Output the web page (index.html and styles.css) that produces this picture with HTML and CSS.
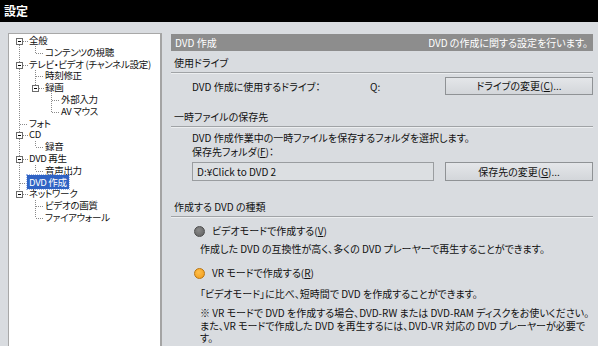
FILE: index.html
```html
<!DOCTYPE html>
<html lang="ja">
<head>
<meta charset="utf-8">
<title>設定</title>
<link rel="stylesheet" href="styles.css">
</head>
<body>
<div class="titlebar">設定</div>
<div class="main">
  <div class="tree">
    <svg class="tree-lines" width="152" height="200" viewBox="0 0 152 200">
      <g stroke="#8a8a8a" stroke-width="1" stroke-dasharray="1 1" fill="none">
        <line x1="10.5" y1="7" x2="10.5" y2="160"/>
        <line x1="14" y1="7.5" x2="19" y2="7.5"/>
        <line x1="14" y1="31.5" x2="19" y2="31.5"/>
        <line x1="11" y1="90.5" x2="19" y2="90.5"/>
        <line x1="14" y1="101.5" x2="19" y2="101.5"/>
        <line x1="14" y1="125.5" x2="19" y2="125.5"/>
        <line x1="11" y1="149.5" x2="19" y2="149.5"/>
        <line x1="14" y1="160.5" x2="19" y2="160.5"/>
        <line x1="26.5" y1="12" x2="26.5" y2="19"/>
        <line x1="26.5" y1="36" x2="26.5" y2="54"/>
        <line x1="26.5" y1="107" x2="26.5" y2="113"/>
        <line x1="26.5" y1="131" x2="26.5" y2="137"/>
        <line x1="26.5" y1="166" x2="26.5" y2="184"/>
        <line x1="27" y1="19.5" x2="35" y2="19.5"/>
        <line x1="27" y1="42.5" x2="35" y2="42.5"/>
        <line x1="30" y1="54.5" x2="35" y2="54.5"/>
        <line x1="27" y1="113.5" x2="35" y2="113.5"/>
        <line x1="27" y1="137.5" x2="35" y2="137.5"/>
        <line x1="27" y1="172.5" x2="35" y2="172.5"/>
        <line x1="27" y1="184.5" x2="35" y2="184.5"/>
        <line x1="42.5" y1="59" x2="42.5" y2="78"/>
        <line x1="43" y1="66.5" x2="51" y2="66.5"/>
        <line x1="43" y1="78.5" x2="51" y2="78.5"/>
      </g>
      <g stroke="#6c6c6c" fill="#ffffff">
        <rect x="7.5" y="4.5" width="6" height="6"/>
        <rect x="7.5" y="28.5" width="6" height="6"/>
        <rect x="23.5" y="51.5" width="6" height="6"/>
        <rect x="7.5" y="98.5" width="6" height="6"/>
        <rect x="7.5" y="122.5" width="6" height="6"/>
        <rect x="7.5" y="157.5" width="6" height="6"/>
      </g>
      <g stroke="#000000">
        <line x1="9" y1="7.5" x2="12" y2="7.5"/>
        <line x1="9" y1="31.5" x2="12" y2="31.5"/>
        <line x1="25" y1="54.5" x2="28" y2="54.5"/>
        <line x1="9" y1="101.5" x2="12" y2="101.5"/>
        <line x1="9" y1="125.5" x2="12" y2="125.5"/>
        <line x1="9" y1="160.5" x2="12" y2="160.5"/>
      </g>
    </svg>
    <div class="row l0"><span class="lbl">全般</span></div>
    <div class="row l1"><span class="lbl">コンテンツの視聴</span></div>
    <div class="row l0"><span class="lbl">テレビ・ビデオ (チャンネル設定)</span></div>
    <div class="row l1"><span class="lbl">時刻修正</span></div>
    <div class="row l1"><span class="lbl">録画</span></div>
    <div class="row l2"><span class="lbl">外部入力</span></div>
    <div class="row l2"><span class="lbl">AV マウス</span></div>
    <div class="row l0"><span class="lbl">フォト</span></div>
    <div class="row l0"><span class="lbl">CD</span></div>
    <div class="row l1"><span class="lbl">録音</span></div>
    <div class="row l0"><span class="lbl">DVD 再生</span></div>
    <div class="row l1"><span class="lbl">音声出力</span></div>
    <div class="row l0"><span class="lbl selected">DVD 作成</span></div>
    <div class="row l0"><span class="lbl">ネットワーク</span></div>
    <div class="row l1"><span class="lbl">ビデオの画質</span></div>
    <div class="row l1"><span class="lbl">ファイアウォール</span></div>
  </div>

  <div class="pane">
    <div class="pane-head"><span>DVD 作成</span><span>DVD の作成に関する設定を行います。</span></div>

    <div class="sec-title first">使用ドライブ</div>
    <div class="drive-row">
      <span class="drive-label">DVD 作成に使用するドライブ：</span>
      <span class="drive">Q:</span>
      <div class="btn">ドライブの変更(<u>C</u>)...</div>
    </div>

    <div class="sec-title second">一時ファイルの保存先</div>
    <div class="text-line desc-top">DVD 作成作業中の一時ファイルを保存するフォルダを選択します。</div>
    <div class="text-line folder-label">保存先フォルダ(<u>F</u>)：</div>
    <div class="folder-row">
      <div class="input">D:¥Click to DVD 2</div>
      <div class="btn">保存先の変更(<u>G</u>)...</div>
    </div>

    <div class="sec-title third">作成する DVD の種類</div>
    <div class="radio-row r1"><span class="radio gray"></span><span>ビデオモードで作成する(<u>V</u>)</span></div>
    <div class="text-line sub d1">作成した DVD の互換性が高く、多くの DVD プレーヤーで再生することができます。</div>
    <div class="radio-row r2"><span class="radio orange"></span><span>VR モードで作成する(<u>R</u>)</span></div>
    <div class="text-line sub d2">「ビデオモード」に比べ、短時間で DVD を作成することができます。</div>
    <div class="note sub">※ VR モードで DVD を作成する場合、DVD-RW または DVD-RAM ディスクをお使いください。<br>また、VR モードで作成した DVD を再生するには、DVD-VR 対応の DVD プレーヤーが必要で<br>す。</div>
  </div>
</div>
</body>
</html>
```

FILE: styles.css
```css
html, body {
  margin: 0;
  padding: 0;
  height: 100%;
  overflow: hidden;
}
body {
  background: #d9dce0;
  font-family: "Noto Sans CJK JP", "Noto Sans", sans-serif;
  font-size: 10px;
  font-feature-settings: "palt";
  color: #111;
}
.titlebar {
  height: 22px;
  background: #000;
  color: #fff;
  font-weight: bold;
  font-size: 12px;
  line-height: 22px;
  padding-left: 4px;
}
.main {
  display: flex;
  gap: 9px;
  padding: 11px 5px 0 8px;
}
.tree {
  position: relative;
  width: 151px;
  height: 320px;
  flex: none;
  background: #fff;
  border-left: 1px solid #a8a8a8;
  border-top: 1px solid #a8a8a8;
  border-right: 2px solid #a4a4a4;
  padding-top: 1px;
  box-sizing: content-box;
  font-size: 9.5px;
  letter-spacing: -0.3px;
}
.tree-lines {
  position: absolute;
  left: 0;
  top: 0;
}
.row {
  position: relative;
  height: 11.8px;
  line-height: 11.8px;
  white-space: nowrap;
}
.row.l0 { padding-left: 18px; }
.row.l1 { padding-left: 34px; }
.row.l2 { padding-left: 50px; }
.lbl {
  padding: 0 2px;
}
.lbl.selected {
  background: #2f63c4;
  color: #fff;
  outline: 1px dotted #9fb8e8;
}
.pane {
  flex: 1;
  display: flex;
  flex-direction: column;
}
.pane-head {
  margin-top: 1px;
  height: 17px;
  background: #8d8d8d;
  color: #fff;
  display: flex;
  justify-content: space-between;
  align-items: center;
  padding: 0 5px 0 4px;
}
.sec-title {
  line-height: 14px;
  padding: 0 3px 2px;
  border-bottom: 1px solid #a0a3a6;
  box-shadow: 0 1px 0 #eceef0;
}
.sec-title.first { margin-top: 5px; }
.sec-title.second { margin-top: 15px; }
.sec-title.third { margin-top: 19px; }
.drive-row {
  margin-top: 4px;
  display: flex;
  align-items: center;
  padding-left: 21px;
  height: 18px;
}
.drive-label { width: 178px; }
.drive { flex: 1; }
.btn {
  width: 146px;
  height: 16px;
  line-height: 16px;
  border: 1px solid #8f9295;
  background: linear-gradient(#e4e6e9, #d3d6da);
  text-align: center;
  margin-left: auto;
}
.folder-row .btn { height: 17px; line-height: 17px; }
.text-line {
  line-height: 12px;
  white-space: nowrap;
}
.desc-top { margin-top: 5px; padding-left: 21px; }
.folder-label { margin-top: 2px; padding-left: 21px; }
.folder-row {
  margin-top: 4px;
  display: flex;
  padding-left: 21px;
}
.input {
  width: 236px;
  height: 17px;
  line-height: 17px;
  border: 1px solid #9a9da0;
  padding-left: 4px;
  background: #dcdfe2;
}
.radio-row {
  display: flex;
  align-items: center;
  gap: 7px;
  padding-left: 23px;
  line-height: 12px;
}
.radio-row.r1 { margin-top: 8px; }
.radio-row.r2 { margin-top: 12px; }
.radio {
  width: 9px;
  height: 9px;
  border-radius: 50%;
  flex: none;
}
.radio.gray {
  background: radial-gradient(circle at 40% 35%, #8a8a8a, #5e5e5e);
  border: 1px solid #4c4c4c;
}
.radio.orange {
  background: radial-gradient(circle at 40% 35%, #ffbf4a, #f09a18);
  border: 1px solid #b9740e;
}
.sub { padding-left: 29px; }
.d1 { margin-top: 6px; }
.d2 { margin-top: 9px; }
.note {
  margin-top: 7px;
  line-height: 12.5px;
  white-space: nowrap;
}
u { text-decoration: underline; }
```
